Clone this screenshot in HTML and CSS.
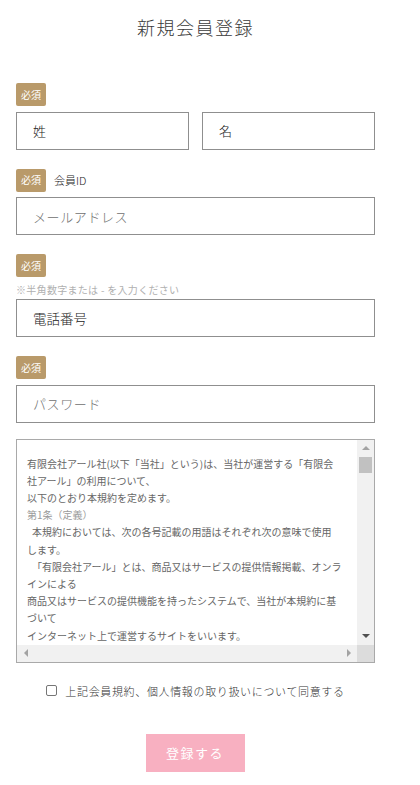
FILE: index.html
```html
<!DOCTYPE html>
<html lang="ja">
<head>
<meta charset="utf-8">
<title>新規会員登録</title>
<link rel="stylesheet" href="styles.css">
</head>
<body>
<main class="page">
  <h1 class="title">新規会員登録</h1>
  <form class="form">
    <div class="field">
      <div class="label-row"><span class="badge">必須</span></div>
      <div class="name-row">
        <div class="input dark">姓</div>
        <div class="input dark">名</div>
      </div>
    </div>
    <div class="field">
      <div class="label-row"><span class="badge">必須</span><span class="label-text">会員ID</span></div>
      <div class="input light">メールアドレス</div>
    </div>
    <div class="field">
      <div class="label-row"><span class="badge">必須</span></div>
      <p class="note">※半角数字または - を入力ください</p>
      <div class="input dark tel">電話番号</div>
    </div>
    <div class="field">
      <div class="label-row"><span class="badge">必須</span></div>
      <div class="input light">パスワード</div>
    </div>
    <div class="terms">
      <div class="terms-body">
        <p>有限会社アール社(以下「当社」という)は、当社が運営する「有限会<br>社アール」の利用について、<br>以下のとおり本規約を定めます。</p>
        <p class="article">第1条（定義）</p>
        <p class="indent">本規約においては、次の各号記載の用語はそれぞれ次の意味で使用<br>します。</p>
        <p class="indent">「有限会社アール」とは、商品又はサービスの提供情報掲載、オンラ<br>インによる<br>商品又はサービスの提供機能を持ったシステムで、当社が本規約に基<br>づいて<br>インターネット上で運営するサイトをいいます。</p>
      </div>
      <div class="vbar">
        <span class="sb-btn"><span class="arrow up"></span></span>
        <span class="thumb"></span>
        <span class="sb-fill"></span>
        <span class="sb-btn"><span class="arrow down"></span></span>
      </div>
      <div class="hbar">
        <span class="sb-btn"><span class="arrow left"></span></span>
        <span class="sb-fill"></span>
        <span class="sb-btn"><span class="arrow right"></span></span>
      </div>
      <div class="corner"></div>
    </div>
    <label class="agree"><span class="check"></span><span class="agree-text">上記会員規約、個人情報の取り扱いについて同意する</span></label>
    <div class="submit-wrap"><button type="button" class="submit">登録する</button></div>
  </form>
</main>
</body>
</html>
```

FILE: styles.css
```css
html, body {
  margin: 0;
  padding: 0;
  background: #fff;
}
body {
  font-family: "Noto Sans CJK JP", "Noto Sans", sans-serif;
  color: #333;
}
.page {
  width: 359px;
  padding: 14px 0 0 16px;
}
.title {
  margin: 0;
  text-align: center;
  font-size: 18px;
  font-weight: 300;
  letter-spacing: 1.5px;
  line-height: 26px;
  color: #3a3a3a;
}
.form {
  margin-top: 43px;
}
.field {
  margin-bottom: 19px;
}
.label-row {
  display: flex;
  align-items: center;
  gap: 8px;
  height: 23px;
  margin-bottom: 5.5px;
}
.badge {
  display: inline-flex;
  align-items: center;
  justify-content: center;
  width: 30px;
  height: 23px;
  border-radius: 2px;
  background: #b99a6a;
  color: #fff;
  font-size: 10px;
  line-height: 1;
}
.label-text {
  font-size: 11px;
  font-weight: 300;
  color: #222;
}
.name-row {
  display: flex;
  gap: 13px;
}
.name-row .input {
  flex: 1;
}
.input {
  box-sizing: border-box;
  height: 38px;
  border: 1px solid #8f8f8f;
  padding: 0 16px;
  display: flex;
  align-items: center;
  font-size: 13px;
  font-weight: 300;
}
.input.dark {
  color: #222;
}
.input.light {
  color: #6f6f6f;
  letter-spacing: 0.6px;
}
.input.tel {
  font-size: 13.5px;
}
.note {
  margin: 1px 0 2.5px;
  font-size: 10px;
  line-height: 14px;
  color: #b0b0b0;
  letter-spacing: 0.3px;
}
.terms {
  box-sizing: border-box;
  margin-top: -3px;
  height: 224px;
  border: 1px solid #a9a9a9;
  display: grid;
  grid-template-columns: 1fr 17px;
  grid-template-rows: 1fr 17px;
}
.terms-body {
  overflow: hidden;
  padding: 15px 0 0 10px;
  font-size: 10px;
  line-height: 17.2px;
  color: #666;
  white-space: nowrap;
}
.terms-body p {
  margin: 0;
}
.terms-body .article {
  color: #9a9a9a;
}
.terms-body .indent {
  text-indent: 5px;
}
.vbar, .hbar {
  background: #f1f1f1;
  display: flex;
}
.vbar {
  flex-direction: column;
}
.sb-btn {
  flex: 0 0 17px;
  width: 17px;
  height: 17px;
  display: flex;
  align-items: center;
  justify-content: center;
}
.sb-fill {
  flex: 1;
}
.thumb {
  flex: 0 0 16px;
  margin: 0 2px;
  background: #c1c1c1;
}
.arrow {
  width: 0;
  height: 0;
  border-style: solid;
}
.arrow.up {
  border-width: 0 4px 4px 4px;
  border-color: transparent transparent #a3a3a3 transparent;
}
.arrow.down {
  border-width: 4px 4px 0 4px;
  border-color: #505050 transparent transparent transparent;
}
.arrow.left {
  border-width: 4px 4px 4px 0;
  border-color: transparent #a3a3a3 transparent transparent;
}
.arrow.right {
  border-width: 4px 0 4px 4px;
  border-color: transparent transparent transparent #a3a3a3;
}
.corner {
  background: #dcdcdc;
}
.agree {
  display: flex;
  align-items: center;
  justify-content: center;
  gap: 8px;
  margin-top: 20px;
}
.check {
  box-sizing: border-box;
  width: 11px;
  height: 11px;
  border: 1px solid #767676;
  border-radius: 2px;
  background: #fff;
}
.agree-text {
  font-size: 11px;
  font-weight: 300;
  letter-spacing: 0.65px;
  color: #333;
  line-height: 16px;
}
.submit-wrap {
  display: flex;
  justify-content: center;
  margin-top: 35px;
  padding-right: 1px;
}
.submit {
  width: 99px;
  height: 38px;
  border: 0;
  background: #f8b0c1;
  color: #fff;
  font-family: "Noto Sans CJK JP", "Noto Sans", sans-serif;
  font-size: 13px;
  letter-spacing: 1.5px;
  padding: 0;
}
```
